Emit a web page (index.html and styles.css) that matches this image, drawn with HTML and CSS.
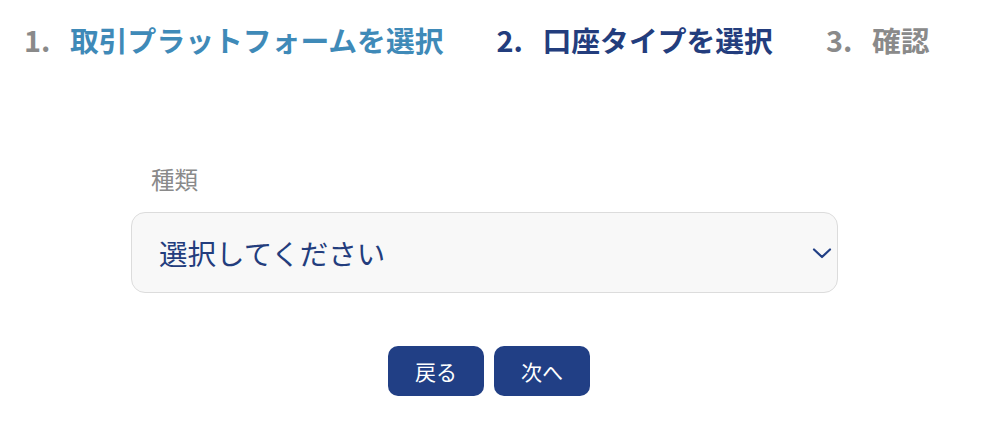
FILE: index.html
```html
<!DOCTYPE html>
<html lang="ja">
<head>
<meta charset="utf-8">
<link rel="stylesheet" href="styles.css">
</head>
<body>
<ol class="steps">
  <li class="step step-done"><span class="num">1.</span><span class="label">取引プラットフォームを選択</span></li>
  <li class="step step-current"><span class="num">2.</span><span class="label">口座タイプを選択</span></li>
  <li class="step step-todo"><span class="num">3.</span><span class="label">確認</span></li>
</ol>
<main class="form">
  <label class="field-label" for="kind">種類</label>
  <div class="select" id="kind">
    <span class="select-value">選択してください</span>
    <svg class="chevron" width="20" height="11" viewBox="0 0 20 11"><path d="M2 1.5 L10 9 L18 1.5" fill="none" stroke="#213f85" stroke-width="2.2" stroke-linecap="round" stroke-linejoin="round"/></svg>
  </div>
  <div class="actions">
    <button class="btn">戻る</button>
    <button class="btn">次へ</button>
  </div>
</main>
</body>
</html>
```
FILE: styles.css
```css
* { box-sizing: border-box; }
body {
  margin: 0;
  font-family: "Noto Sans CJK JP", "Noto Sans", sans-serif;
  background: #fff;
}
.steps {
  list-style: none;
  margin: 0;
  padding: 19px 0 0 24px;
  display: flex;
  gap: 53px;
  font-size: 28.8px;
  font-weight: 700;
  line-height: 41px;
}
.step { display: flex; }
.num { width: 46px; }
.step-done .num { color: #8a8a8a; }
.step-done .label { color: #3f8ab8; }
.step-current { color: #233d7d; }
.step-todo { color: #8a8a8a; }

.form {
  margin: 0;
  padding: 0 148px 0 131px;
  display: flex;
  flex-direction: column;
}
.field-label {
  margin-top: 104px;
  padding-left: 20px;
  font-size: 23.5px;
  line-height: 30px;
  color: #8a8a8a;
}
.select {
  margin-top: 18px;
  height: 81px;
  background: #f8f8f8;
  border: 1px solid #dcdcdc;
  border-radius: 14px;
  display: flex;
  align-items: center;
  justify-content: space-between;
  padding: 0 5px 0 27px;
}
.select-value {
  font-size: 28.5px;
  color: #233d7d;
}
.chevron { margin-top: 2px; }
.actions {
  margin-top: 53px;
  display: flex;
  justify-content: center;
  gap: 10px;
  padding-left: 9px;
}
.btn {
  width: 96px;
  height: 50px;
  border: none;
  border-radius: 10px;
  background: #213f85;
  color: #fff;
  font-family: inherit;
  font-size: 21px;
}
```
